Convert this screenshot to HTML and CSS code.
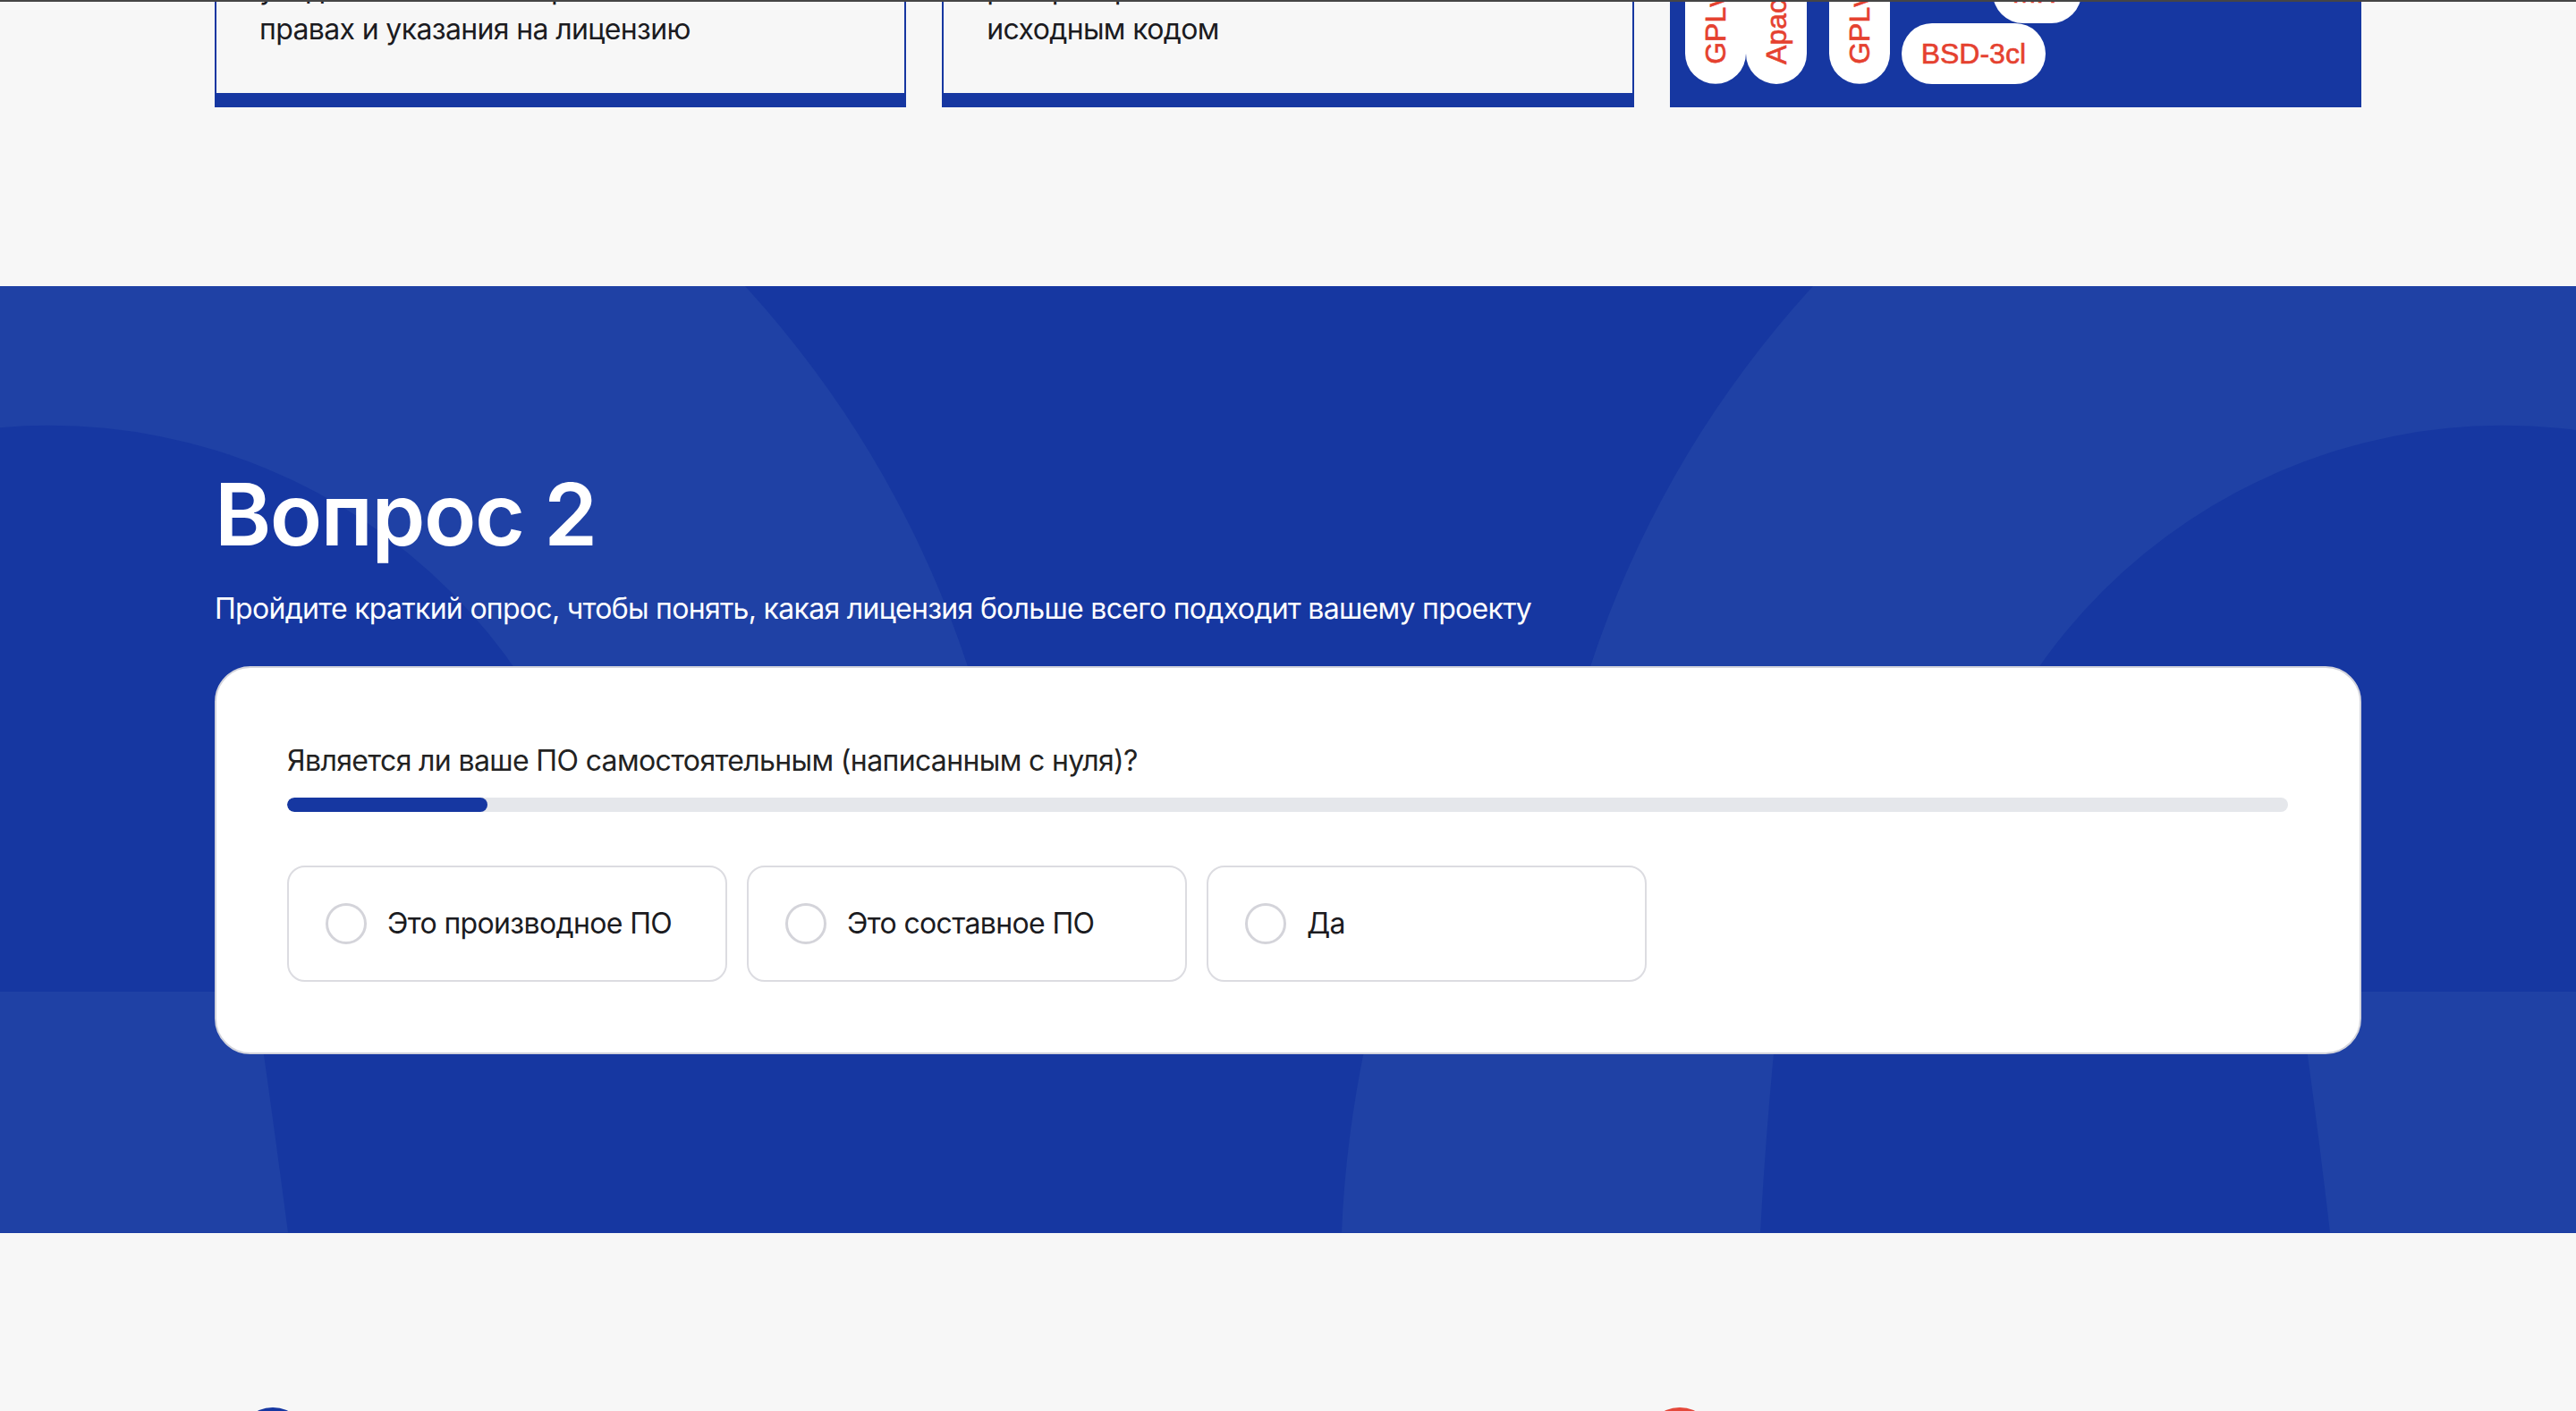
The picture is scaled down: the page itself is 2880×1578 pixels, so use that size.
FILE: index.html
```html
<!DOCTYPE html>
<html lang="ru">
<head>
<meta charset="utf-8">
<title>Вопрос 2</title>
<link rel="stylesheet" href="styles.css">
</head>
<body>
<section class="top">
  <div class="cards">
    <div class="card card--outline">
      <p class="card__text">Разрешает практически любое использование при условии сохранения уведомлений об авторских<br>правах и указания на лицензию</p>
    </div>
    <div class="card card--outline">
      <p class="card__text">Требует, чтобы производные работы распространялись вместе с<br>исходным кодом</p>
    </div>
    <div class="card card--tags">
      <span class="tag tag--v tag--gpl3">GPLv3</span>
      <span class="tag tag--v tag--apache">Apache 2.0</span>
      <span class="tag tag--v tag--gpl2">GPLv2</span>
      <span class="tag tag--mit">MIT</span>
      <span class="tag tag--bsd">BSD-3cl</span>
    </div>
  </div>
</section>

<section class="quiz">
  <svg class="quiz__bg" viewBox="0 0 2880 1060" preserveAspectRatio="none" aria-hidden="true">
    <defs>
      <clipPath id="bandTop"><rect x="0" y="0" width="2880" height="790"/></clipPath>
    </defs>
    <g clip-path="url(#bandTop)">
      <circle cx="-30" cy="790" r="1170" fill="#1f41a5"/>
      <circle cx="55" cy="790" r="634" fill="#1637a1"/>
      <circle cx="2890" cy="790" r="1170" fill="#1f41a5"/>
      <circle cx="2799" cy="790" r="634" fill="#1637a1"/>
    </g>
    <rect x="0" y="790" width="2880" height="270" fill="#1f41a5"/>
    <path d="M285 790 L1540 790 Q1505 930 1500 1060 L322 1060 Q305 930 285 790 Z" fill="#1637a1"/>
    <path d="M1990 790 L2570 790 Q2590 930 2605 1060 L1968 1060 Q1975 930 1990 790 Z" fill="#1637a1"/>
  </svg>
  <div class="quiz__inner">
    <h2 class="quiz__title">Вопрос 2</h2>
    <p class="quiz__lead">Пройдите краткий опрос, чтобы понять, какая лицензия больше всего подходит вашему проекту</p>
    <div class="quiz__card">
      <p class="quiz__question">Является ли ваше ПО самостоятельным (написанным с нуля)?</p>
      <div class="progress"><div class="progress__fill" style="width:10%"></div></div>
      <div class="options">
        <label class="option"><span class="radio"></span><span class="option__label">Это производное ПО</span></label>
        <label class="option"><span class="radio"></span><span class="option__label">Это составное ПО</span></label>
        <label class="option"><span class="radio"></span><span class="option__label">Да</span></label>
      </div>
    </div>
  </div>
</section>

<section class="next">
  <span class="dot dot--blue"></span>
  <span class="dot dot--red"></span>
</section>
</body>
</html>
```

FILE: styles.css
```css
html, body {
  margin: 0;
  padding: 0;
}

body {
  background: #f7f7f7;
  font-family: Inter, "Noto Sans", sans-serif;
  color: #1b1b1f;
}

/* ---------- top (scrolled) card row ---------- */
.top {
  height: 320px;
  box-sizing: border-box;
  border-top: 2px solid #454545;
  padding-bottom: 200px;
  display: flex;
  align-items: flex-end;
  overflow: hidden;
}

.cards {
  width: 2400px;
  margin: 0 auto;
  display: grid;
  grid-template-columns: repeat(3, 1fr);
  column-gap: 40px;
}

.card--outline {
  display: flex;
  flex-direction: column;
  justify-content: flex-end;
  background: #f7f7f7;
  border: 2px solid #1637a1;
  border-bottom-width: 16px;
  padding: 48px 48px 48px;
}

.card__text {
  margin: 0;
  font-size: 32px;
  line-height: 1.4;
  letter-spacing: -0.02em;
  color: #1b1b1f;
}

.card--tags {
  position: relative;
  background: #1637a1;
}

.tag {
  position: absolute;
  box-sizing: border-box;
  height: 68px;
  padding: 0 22px;
  border-radius: 34px;
  background: #fff;
  color: #e5412f;
  font-family: "Liberation Sans", Arial, sans-serif;
  font-size: 32px;
  line-height: 68px;
  white-space: nowrap;
  -webkit-text-stroke: 0.6px #e5412f;
}

.tag--v {
  height: auto;
  width: 68px;
  padding: 22px 0;
  writing-mode: vertical-rl;
  transform: rotate(180deg);
  bottom: 26px;
}

.tag--gpl3 { left: 17px; }
.tag--apache { left: 85px; }
.tag--gpl2 { left: 178px; }

.tag--mit {
  left: 361px;
  bottom: 94px;
}

.tag--bsd {
  left: 259px;
  bottom: 26px;
}

/* ---------- quiz ---------- */
.quiz {
  position: relative;
  overflow: hidden;
  background: #1637a1;
  padding: 200px 0;
}

.quiz__bg {
  position: absolute;
  inset: 0;
  width: 100%;
  height: 100%;
}

.quiz__inner {
  position: relative;
  width: 2400px;
  margin: 0 auto;
}

.quiz__title {
  margin: 0;
  font-size: 96px;
  font-weight: 600;
  line-height: 110px;
  letter-spacing: -0.015em;
  color: #fff;
}

.quiz__lead {
  margin: 29px 0 41px;
  font-size: 32px;
  line-height: 1.4;
  letter-spacing: -0.022em;
  color: #fff;
}

.quiz__card {
  background: #fff;
  border: 2px solid #d3d4dc;
  border-radius: 40px;
  padding: 82px 80px 79px 79px;
}

.quiz__question {
  margin: 0;
  font-size: 32px;
  line-height: 1.4;
  letter-spacing: -0.02em;
  color: #222;
}

.progress {
  margin-top: 18px;
  height: 16px;
  border-radius: 8px;
  background: #e5e7eb;
  overflow: hidden;
}

.progress__fill {
  height: 100%;
  border-radius: 8px;
  background: #1637a1;
}

.options {
  margin-top: 60px;
  display: flex;
  gap: 22px;
}

.option {
  box-sizing: border-box;
  width: 492px;
  height: 130px;
  padding: 0 40px 0 41px;
  display: flex;
  align-items: center;
  gap: 23px;
  border: 2px solid #dcdce1;
  border-radius: 20px;
  background: #fff;
  font-size: 32px;
  letter-spacing: -0.02em;
  color: #1b1b1f;
  cursor: pointer;
}

.radio {
  flex: none;
  box-sizing: border-box;
  width: 46px;
  height: 46px;
  border: 3px solid #d4d4da;
  border-radius: 50%;
}

/* ---------- next section peek ---------- */
.next {
  width: 2400px;
  margin: 0 auto;
  padding-top: 195px;
  display: flex;
}

.dot {
  width: 80px;
  height: 80px;
  border-radius: 50%;
}

.dot--blue {
  margin-left: 25px;
  background: #1637a1;
}

.dot--red {
  margin-left: 1493px;
  background: #e5483a;
}
```
